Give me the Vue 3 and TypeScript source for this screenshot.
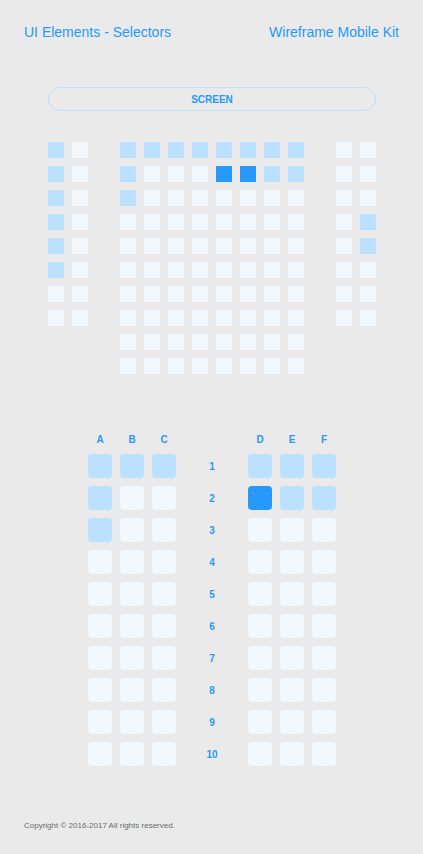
<script setup lang="ts">
import { reactive } from 'vue'

type SeatState = 'free' | 'taken' | 'selected'

interface Seat {
  id: string
  state: SeatState
}

const states: Record<string, SeatState> = { '.': 'free', x: 'taken', o: 'selected' }

function parseRow(prefix: string, row: string): Seat[] {
  return [...row].map((c, i) => ({ id: `${prefix}-${i + 1}`, state: states[c] }))
}

const blocks = reactive(
  [
    { name: 'left', columns: 2, rows: ['x.', 'x.', 'x.', 'x.', 'x.', 'x.', '..', '..'] },
    {
      name: 'center',
      columns: 8,
      rows: [
        'xxxxxxxx', 'x...ooxx', 'x.......', '........', '........',
        '........', '........', '........', '........', '........',
      ],
    },
    { name: 'right', columns: 2, rows: ['..', '..', '..', '.x', '.x', '..', '..', '..'] },
  ].map((b) => ({
    name: b.name,
    columns: b.columns,
    seats: b.rows.flatMap((row, i) => parseRow(`${b.name}-${i + 1}`, row)),
  })),
)

const leftLetters = ['A', 'B', 'C']
const rightLetters = ['D', 'E', 'F']

const cabin = reactive(
  ['xxxxxx', 'x..oxx', 'x.....', '......', '......', '......', '......', '......', '......', '......'].map(
    (row, i) => {
      const seats = parseRow(`cabin-${i + 1}`, row)
      return { number: i + 1, left: seats.slice(0, 3), right: seats.slice(3) }
    },
  ),
)

function toggle(seat: Seat) {
  seat.state = seat.state === 'selected' ? 'free' : 'selected'
}
</script>

<template>
  <div class="page">
    <header class="header">
      <h1 class="title">UI Elements - Selectors</h1>
      <p class="title">Wireframe Mobile Kit</p>
    </header>

    <main class="main">
      <section class="cinema" aria-label="Cinema seats">
        <div class="screen">SCREEN</div>
        <div class="blocks">
          <div v-for="block in blocks" :key="block.name" class="block" :class="{ wide: block.columns === 8 }">
            <input
              v-for="seat in block.seats"
              :id="seat.id"
              :key="seat.id"
              type="checkbox"
              class="seat"
              :aria-label="`Seat ${seat.id}`"
              :class="seat.state"
              :checked="seat.state === 'selected'"
              :disabled="seat.state === 'taken'"
              @change="toggle(seat)"
            />
          </div>
        </div>
      </section>

      <section class="cabin" aria-label="Cabin seats">
        <div class="row letters">
          <span v-for="l in leftLetters" :key="l" class="label">{{ l }}</span>
          <span></span>
          <span v-for="l in rightLetters" :key="l" class="label">{{ l }}</span>
        </div>
        <div v-for="row in cabin" :key="row.number" class="row">
          <input
            v-for="(seat, i) in row.left"
            :id="seat.id"
            :key="seat.id"
            type="checkbox"
            class="seat rounded"
            :aria-label="`Seat ${row.number}${leftLetters[i]}`"
            :class="seat.state"
            :checked="seat.state === 'selected'"
            :disabled="seat.state === 'taken'"
            @change="toggle(seat)"
          />
          <span class="label number">{{ row.number }}</span>
          <input
            v-for="(seat, i) in row.right"
            :id="seat.id"
            :key="seat.id"
            type="checkbox"
            class="seat rounded"
            :aria-label="`Seat ${row.number}${rightLetters[i]}`"
            :class="seat.state"
            :checked="seat.state === 'selected'"
            :disabled="seat.state === 'taken'"
            @change="toggle(seat)"
          />
        </div>
      </section>
    </main>

    <footer class="footer">Copyright © 2016-2017 All rights reserved.</footer>
  </div>
</template>

<style>
body {
  margin: 0;
  background: #eaeaea;
}
</style>

<style scoped>
.page {
  box-sizing: border-box;
  min-height: 100vh;
  padding: 24px;
  display: flex;
  flex-direction: column;
  background: #eaeaea;
  color: #2699fb;
  font-family: 'Liberation Sans', Arial, sans-serif;
}

.header {
  display: flex;
  justify-content: space-between;
}

.title {
  margin: 0;
  font-size: 14px;
  font-weight: 400;
  line-height: 16px;
}

.main {
  display: flex;
  flex-direction: column;
  align-items: center;
  padding: 47px 23px 0 24px;
}

.cinema {
  display: flex;
  flex-direction: column;
  gap: 31px;
}

.screen {
  box-sizing: border-box;
  height: 24px;
  border: 1px solid #bce0ff;
  border-radius: 12px;
  font-size: 10px;
  font-weight: 700;
  line-height: 24px;
  text-align: center;
}

.blocks {
  display: flex;
  align-items: flex-start;
  gap: 32px;
}

.block {
  display: grid;
  grid-template-columns: repeat(2, 16px);
  grid-auto-rows: 16px;
  gap: 8px;
}

.block.wide {
  grid-template-columns: repeat(8, 16px);
}

.seat {
  appearance: none;
  width: 100%;
  height: 100%;
  margin: 0;
  background: #f1f9ff;
  cursor: pointer;
}

.seat.rounded {
  border-radius: 4px;
}

.seat.taken {
  background: #bce0ff;
  cursor: default;
}

.seat.selected {
  background: #2699fb;
}

.cabin {
  display: grid;
  gap: 8px;
  margin-top: 60px;
}

.row {
  display: grid;
  grid-template-columns: repeat(3, 24px) 56px repeat(3, 24px);
  grid-auto-rows: 24px;
  gap: 8px;
}

.row.letters {
  grid-auto-rows: 12px;
}

.label {
  align-self: center;
  font-size: 10px;
  font-weight: 700;
  line-height: 12px;
  text-align: center;
}

.label.number {
  padding-top: 2px;
}

.footer {
  margin-top: auto;
  color: #6b6b6b;
  font-size: 8px;
  line-height: 8px;
}
</style>
